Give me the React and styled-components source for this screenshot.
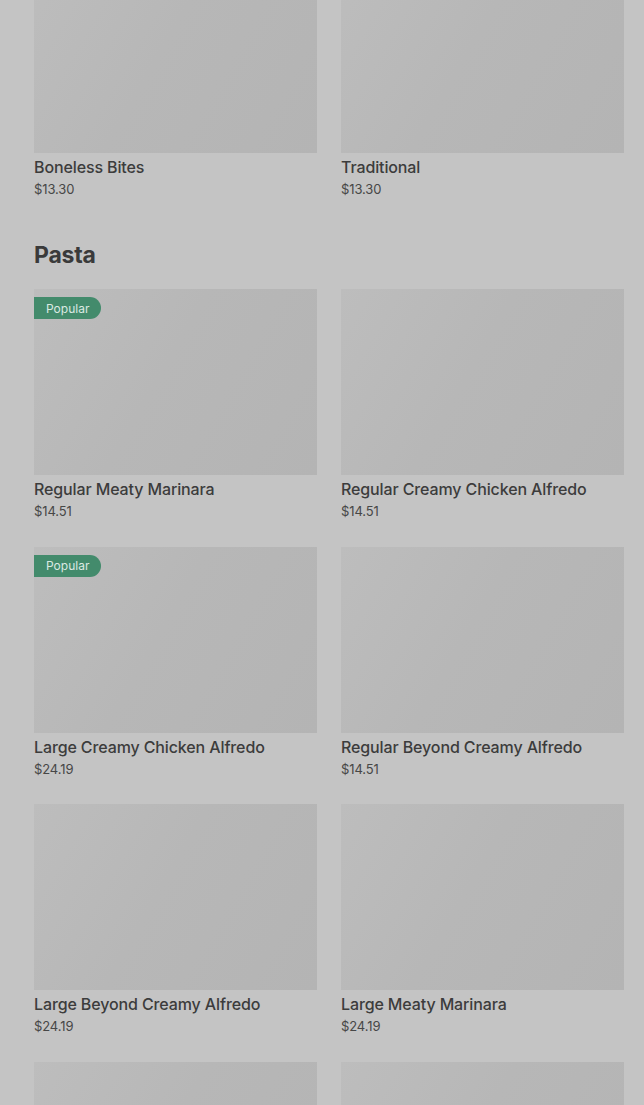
import styled, { createGlobalStyle } from "styled-components"

const Global = createGlobalStyle`
  html, body {
    margin: 0;
    padding: 0;
    background: #c4c4c4;
    font-family: Inter, "Noto Sans", Roboto, sans-serif;
  }
`

const Page = styled.div`
  padding: 0 20px 0 34px;
  margin-top: -33px;
  overflow: hidden;
  height: 1138px;
`

const Section = styled.section`
  margin-bottom: 40px;
`

const Heading = styled.h2`
  margin: 0 0 17px;
  font-size: 23px;
  line-height: 33px;
  font-weight: 700;
  color: #3a3a3a;
  letter-spacing: -0.2px;
`

const Grid = styled.div`
  display: grid;
  grid-template-columns: 283px 283px;
  column-gap: 24px;
  row-gap: 25.6px;
`

const Card = styled.div`
  display: flex;
  flex-direction: column;
`

const Thumb = styled.div`
  position: relative;
  height: 186px;
  background: linear-gradient(120deg, #bdbdbd 0%, #b7b7b7 45%, #b4b4b4 100%);
`

const Badge = styled.span`
  position: absolute;
  left: 0;
  top: 8px;
  height: 22px;
  padding: 0 12px;
  display: flex;
  align-items: center;
  background: #438b6c;
  color: #dbe9e2;
  font-size: 12px;
  border-radius: 0 11px 11px 0;
`

const Title = styled.div`
  margin-top: 3px;
  font-size: 16px;
  line-height: 22px;
  font-weight: 500;
  color: #3c3c3c;
  letter-spacing: -0.12px;
`

const Price = styled.div`
  padding-top: 1px;
  font-size: 13px;
  line-height: 20px;
  color: #474747;
  letter-spacing: -0.1px;
`

const sections = [
  {
    name: null,
    items: [
      { title: "Boneless Bites", price: "$13.30" },
      { title: "Traditional", price: "$13.30" },
    ],
  },
  {
    name: "Pasta",
    items: [
      { title: "Regular Meaty Marinara", price: "$14.51", popular: true },
      { title: "Regular Creamy Chicken Alfredo", price: "$14.51" },
      { title: "Large Creamy Chicken Alfredo", price: "$24.19", popular: true },
      { title: "Regular Beyond Creamy Alfredo", price: "$14.51" },
      { title: "Large Beyond Creamy Alfredo", price: "$24.19" },
      { title: "Large Meaty Marinara", price: "$24.19" },
      { title: "", price: "" },
      { title: "", price: "" },
    ],
  },
]

const App = () => {
  return (
    <>
      <Global />
      <Page>
        {sections.map((s, i) => (
          <Section key={i}>
            {s.name && <Heading>{s.name}</Heading>}
            <Grid>
              {s.items.map((it, j) => (
                <Card key={j}>
                  <Thumb>{it.popular && <Badge>Popular</Badge>}</Thumb>
                  <Title>{it.title}</Title>
                  <Price>{it.price}</Price>
                </Card>
              ))}
            </Grid>
          </Section>
        ))}
      </Page>
    </>
  )
}

export default App
